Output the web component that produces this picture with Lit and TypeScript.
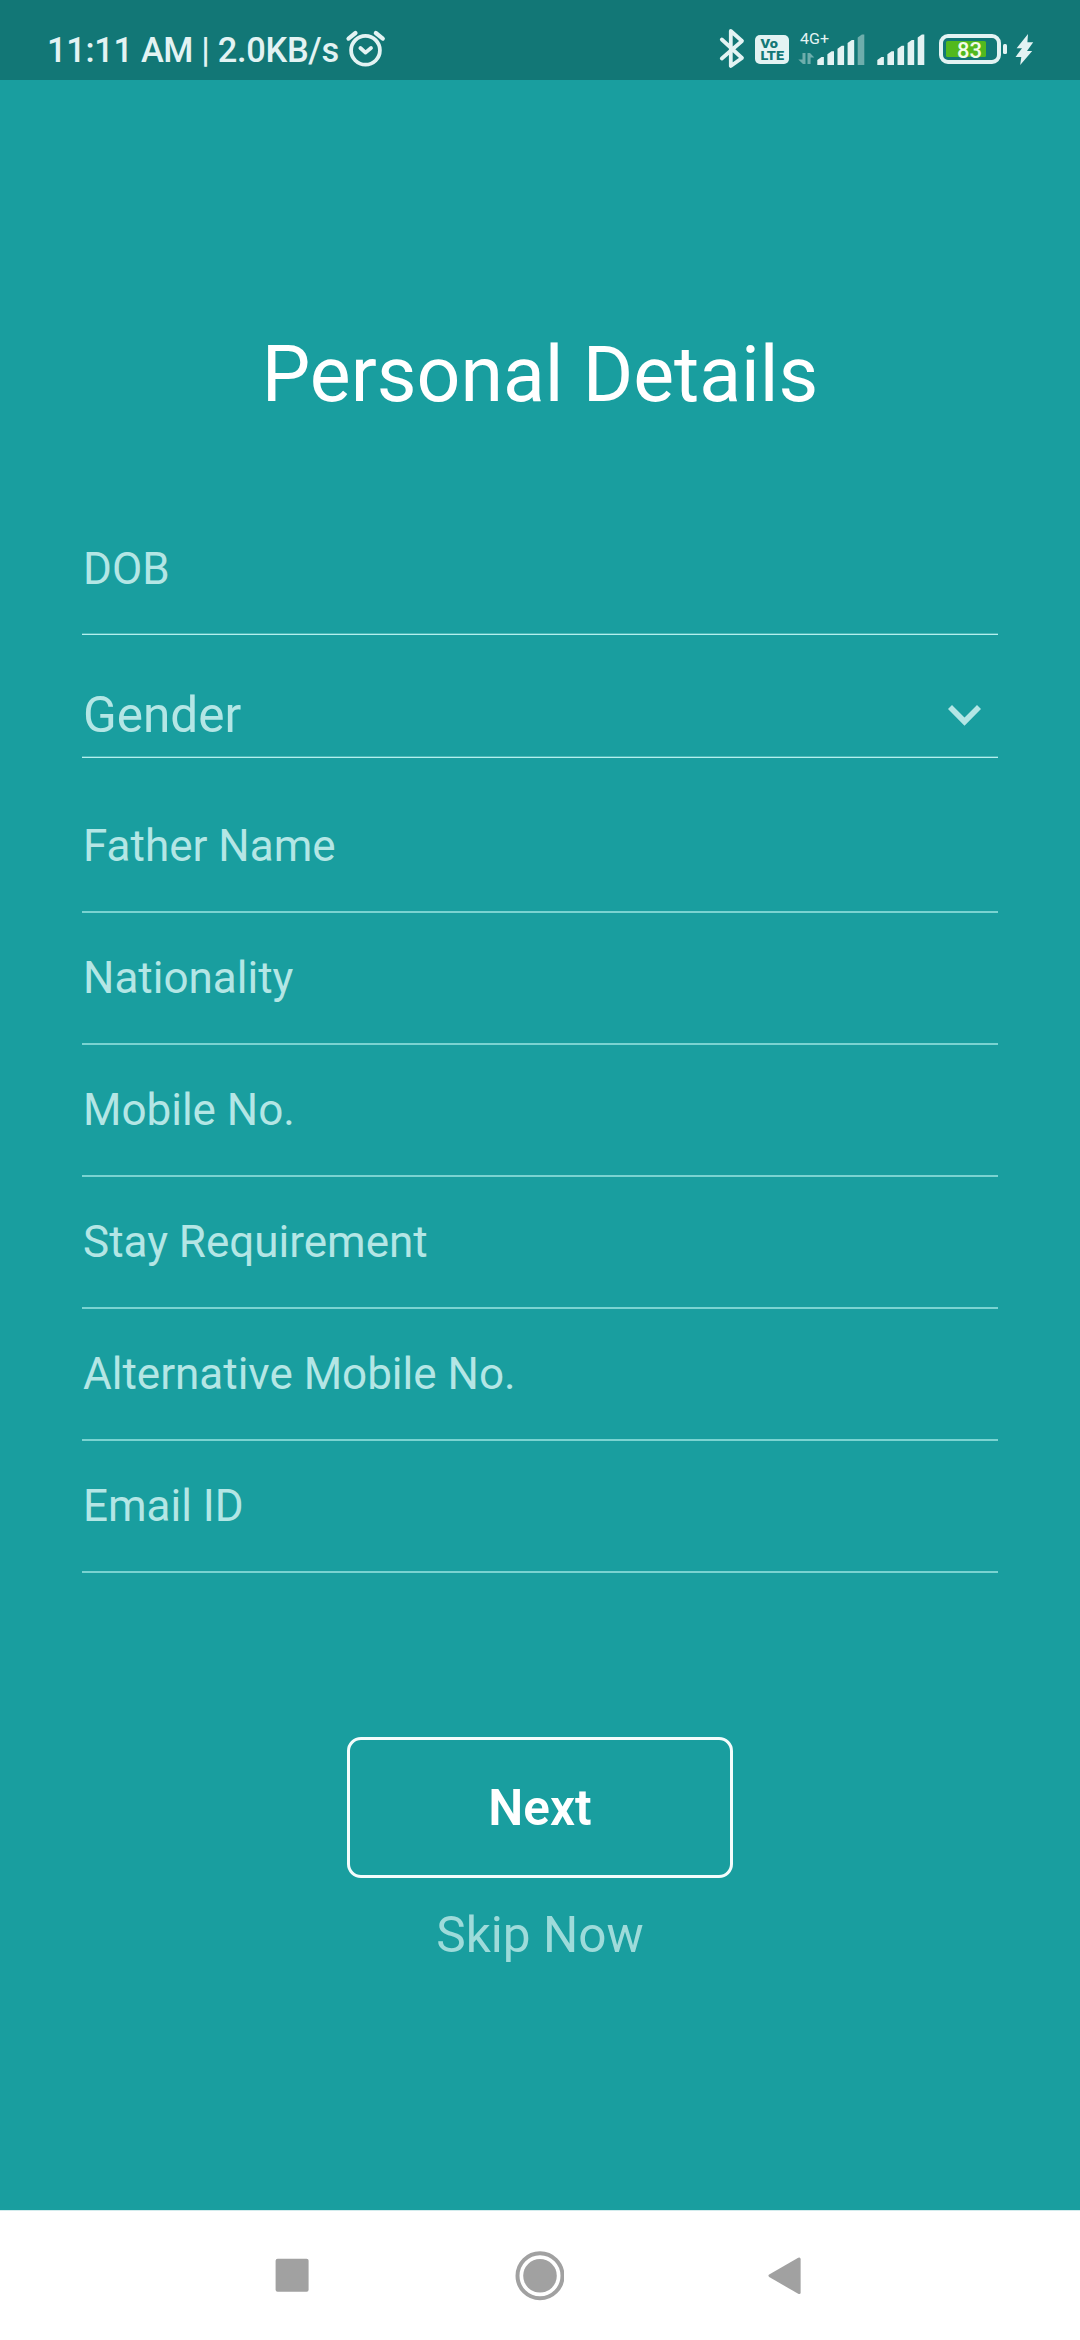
import { LitElement, html, svg, css } from "lit";
import { customElement } from "lit/decorators.js";

const BAR_TOPS = [57, 51.3, 45.8, 40, 34.5];

/** Five signal bars; bars from index `active` on are dimmed. */
const signalBars = (active: number) => svg`${BAR_TOPS.map((top, i) => {
  const x = 1.3 + i * 10.1;
  return svg`<path class=${i < active ? "on" : "off"}
    d="M${x} 65V${top + 3}L${x + 4.2} ${top}H${x + 6.6}V65Z" />`;
})}`;

@customElement("status-bar")
export class StatusBar extends LitElement {
  static styles = css`
    :host {
      display: flex;
      justify-content: space-between;
      height: 80px;
      background: #127776;
      color: #e3f3f3;
      font-family: Roboto, sans-serif;
    }
    .side {
      display: flex;
    }
    .left {
      padding-left: 47px;
    }
    .right {
      padding-right: 42px;
    }
    .clock {
      font-size: 34.4px;
      font-weight: 500;
      letter-spacing: -0.32px;
      line-height: 41px;
      padding-top: 30px;
      width: 297px;
      white-space: nowrap;
    }
    svg {
      display: block;
      height: 80px;
      font-family: Roboto, sans-serif;
    }
    .line {
      fill: none;
      stroke: #e3f3f3;
      stroke-linecap: round;
      stroke-linejoin: round;
    }
    .on {
      fill: #e3f3f3;
    }
    .off {
      fill: #6eaeac;
    }
    .charge {
      fill: #52b91e;
    }
    .badge {
      fill: #127776;
      font-size: 12px;
      font-weight: 900;
    }
    .network {
      fill: #e3f3f3;
      font-size: 15.5px;
    }
    .percent {
      fill: #f2fbe9;
      font-size: 22px;
      font-weight: 500;
    }
  `;

  render() {
    return html`
      <div class="side left">
        <span class="clock">11:11 AM | 2.0KB/s</span>
        <svg width="44" viewBox="344 0 44 80">
          <circle class="line" cx="365.5" cy="50.3" r="14.4" stroke-width="3.8" />
          <path class="line" stroke-width="4.2" d="M348.5 38.6L355.5 33M382.8 38.6L375.8 33" />
          <path class="line" stroke-width="3.8" d="M360.4 48L365.5 52.6L371 48" />
        </svg>
      </div>
      <div class="side right">
        <svg width="34" viewBox="716 0 34 80">
          <path class="line" stroke-width="3.8"
            d="M721.8 39.5L742 58L730.8 66V31L742 41L721.8 58.5" />
        </svg>
        <svg width="46" viewBox="750 0 46 80">
          <rect class="on" x="755" y="35" width="34" height="29" rx="5" />
          <text class="badge" x="760.5" y="48" textLength="17.5" lengthAdjust="spacingAndGlyphs">Vo</text>
          <text class="badge" x="760.5" y="60.3" textLength="23.5" lengthAdjust="spacingAndGlyphs">LTE</text>
        </svg>
        <svg width="80" viewBox="796 0 80 80">
          <text class="network" x="800" y="44" textLength="29" lengthAdjust="spacingAndGlyphs">4G+</text>
          <path class="off" d="M802.5 53H805.5V64H803L798.3 59.5H802.5ZM807.5 64V53H810L814.3 57.5H810.6V64Z" />
          <g transform="translate(816 0)">${signalBars(4)}</g>
        </svg>
        <svg width="60" viewBox="876 0 60 80">
          <g transform="translate(876 0)">${signalBars(5)}</g>
        </svg>
        <svg width="76" viewBox="936 0 76 80">
          <rect class="line" x="941" y="36" width="58" height="26" rx="7" stroke-width="4" />
          <rect class="charge" x="946" y="41" width="40" height="16" rx="1.5" />
          <rect class="on" x="1003" y="44" width="4" height="10" rx="1.5" />
          <text class="percent" x="957" y="58">83</text>
        </svg>
        <svg width="26" viewBox="1012 0 26 80">
          <path class="on" d="M1028 34L1016.6 48.3H1022L1015.5 57H1021.3L1020.2 65L1032.2 51H1027L1033.2 42.3H1027.4Z" />
        </svg>
      </div>
    `;
  }
}

@customElement("nav-bar")
export class NavBar extends LitElement {
  static styles = css`
    :host {
      display: flex;
      align-items: center;
      justify-content: space-between;
      box-sizing: border-box;
      height: 130px;
      padding: 0 270px 0 268px;
      border-top: 1px solid #d3eced;
      background: #fff;
    }
    svg {
      display: block;
      width: 50px;
      height: 50px;
    }
    .solid {
      fill: #a1a1a1;
    }
    .ring {
      fill: none;
      stroke: #a1a1a1;
      stroke-width: 4;
    }
  `;

  render() {
    return html`
      <svg viewBox="0 0 50 50"><rect class="solid" x="7.6" y="7.8" width="33" height="33" rx="2" /></svg>
      <svg viewBox="0 0 50 50">
        <circle class="ring" cx="26" cy="24.8" r="22.5" />
        <circle class="solid" cx="26" cy="24.8" r="16.8" />
      </svg>
      <svg viewBox="0 0 50 50">
        <path class="solid" d="M9.2 23.6L38.2 6.8Q40.6 5.8 40.6 8.2V41.4Q40.6 43.8 38.2 42.8L9.2 26Q7.6 24.8 9.2 23.6Z" />
      </svg>
    `;
  }
}

interface Field {
  label: string;
  select?: boolean;
}

const FIELDS: Field[] = [
  { label: "DOB" },
  { label: "Gender", select: true },
  { label: "Father Name" },
  { label: "Nationality" },
  { label: "Mobile No." },
  { label: "Stay Requirement" },
  { label: "Alternative Mobile No." },
  { label: "Email ID" },
];

@customElement("app-root")
export class AppRoot extends LitElement {
  static styles = css`
    :host {
      display: flex;
      flex-direction: column;
      height: 2340px;
      background: #199e9f;
      font-family: Roboto, sans-serif;
    }
    main {
      flex: 1;
      display: flex;
      flex-direction: column;
      align-items: center;
      padding: 0 82px;
    }
    .title {
      margin: 248px 0 0;
      color: #fff;
      font-size: 77px;
      font-weight: 400;
      line-height: 94px;
      white-space: nowrap;
    }
    .form {
      align-self: stretch;
      margin-top: 81px;
    }
    .field {
      display: flex;
      align-items: flex-start;
      justify-content: space-between;
      box-sizing: border-box;
      height: 132px;
      padding: 39px 0 0 1px;
      border-bottom: 2px solid #7ad3d1;
      color: #b4e6e5;
      font-size: 44px;
      line-height: 52px;
    }
    .field:first-child {
      padding-top: 40px;
    }
    .field.select {
      height: 123px;
      margin-bottom: 23px;
      padding-top: 51px;
      font-size: 49.5px;
      line-height: 58px;
    }
    .field:first-child,
    .field.select {
      border-bottom: 1px solid #b4efee;
      box-shadow: inset 0 -1px #4db9b8;
    }
    .chevron {
      width: 50px;
      height: 50px;
      fill: #b4e6e5;
    }
    .next {
      box-sizing: border-box;
      width: 386px;
      height: 141px;
      margin: 164px 0 0;
      padding: 0;
      border: 3px solid #f4fcfc;
      border-radius: 14px;
      background: none;
      color: #fff;
      font: 600 49.5px/58px Roboto, sans-serif;
    }
    .skip {
      margin-top: 28px;
      color: #9edbda;
      font-size: 49.5px;
      line-height: 58px;
    }
  `;

  render() {
    return html`
      <status-bar></status-bar>
      <main>
        <h1 class="title">Personal Details</h1>
        <div class="form">
          ${FIELDS.map(
            (f) => html`<div class="field ${f.select ? "select" : ""}">
              <span>${f.label}</span>
              ${f.select
                ? html`<svg class="chevron" viewBox="0 0 50 50">
                    <path d="M0 23L4 19L16.5 31.6L29 19L33 23L16.5 39.8Z" />
                  </svg>`
                : ""}
            </div>`
          )}
        </div>
        <button class="next">Next</button>
        <span class="skip">Skip Now</span>
      </main>
      <nav-bar></nav-bar>
    `;
  }
}
